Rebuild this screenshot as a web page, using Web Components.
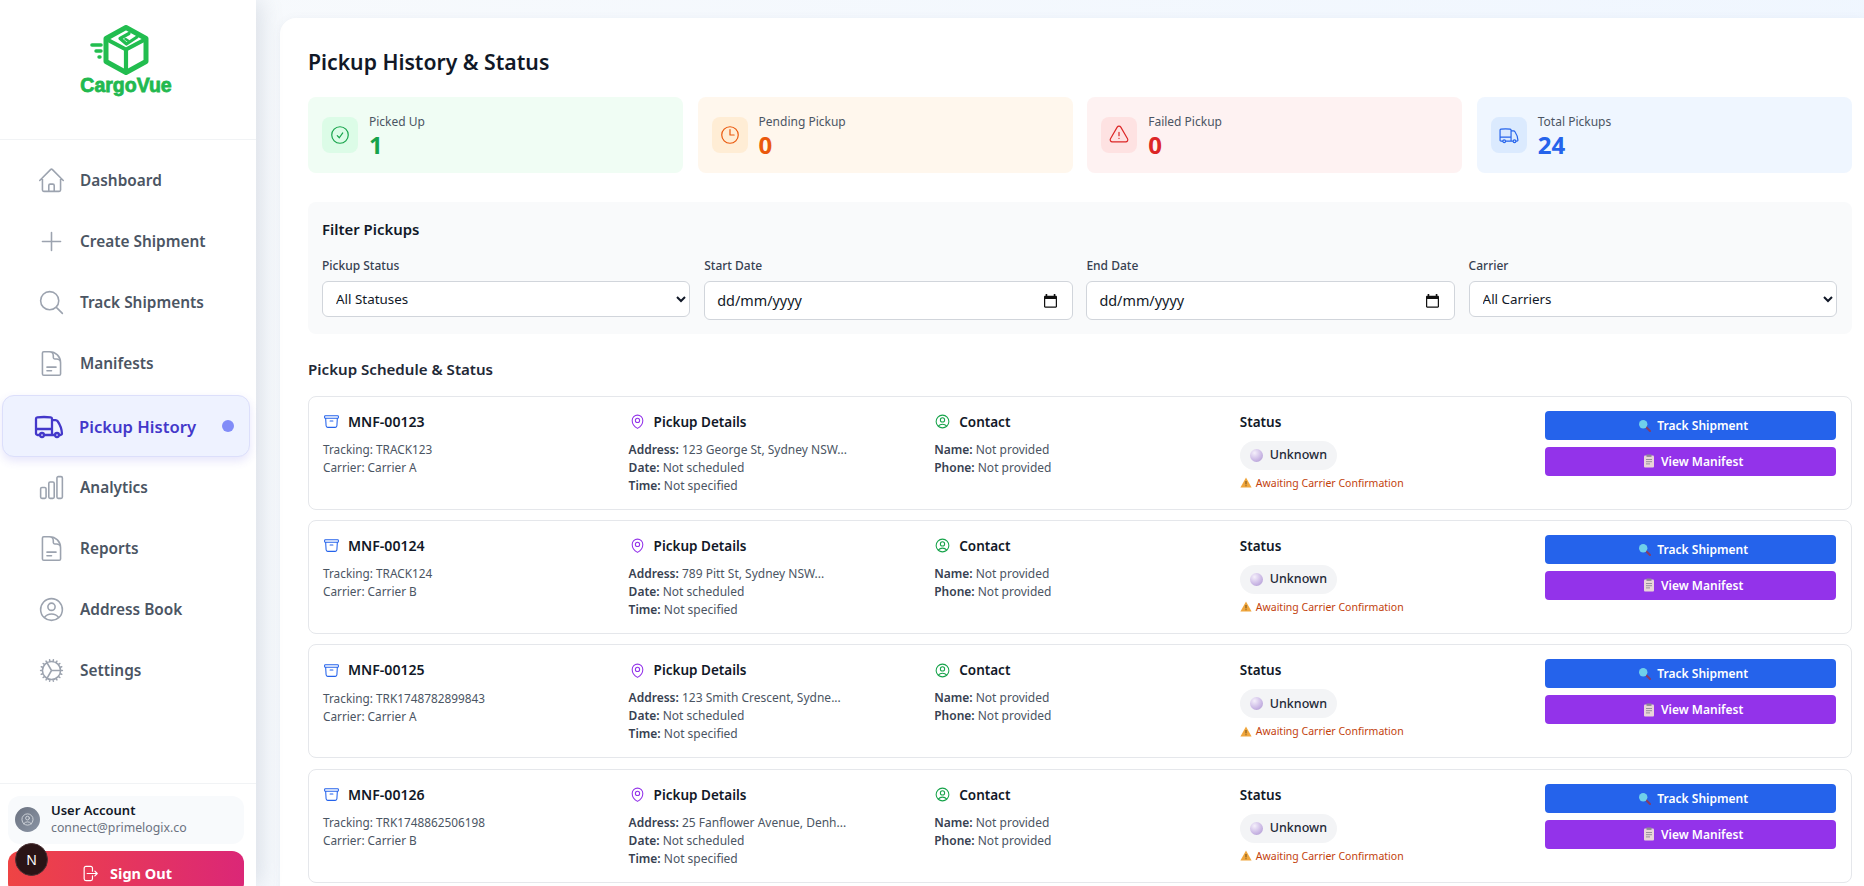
<!DOCTYPE html>
<html lang="en">
<head>
<meta charset="utf-8">
<title>CargoVue - Pickup History</title>
<style>
  html, body { margin: 0; height: 100%; overflow: hidden; }
  body {
    font-family: "Noto Sans", "Open Sans", sans-serif;
    color: #111827;
    display: flex;
    background: linear-gradient(100deg, #f8fafc 0%, #eff6ff 100%);
  }
</style>
</head>
<body>
  <cv-sidebar></cv-sidebar>
  <cv-main>
    <h-title>Pickup History &amp; Status</h-title>
    <stat-row>
      <stat-card tone="green" icon="check" label="Picked Up" value="1"></stat-card>
      <stat-card tone="orange" icon="clock" label="Pending Pickup" value="0"></stat-card>
      <stat-card tone="red" icon="warning" label="Failed Pickup" value="0"></stat-card>
      <stat-card tone="blue" icon="truck" label="Total Pickups" value="24"></stat-card>
    </stat-row>
    <filter-panel></filter-panel>
    <section-title>Pickup Schedule &amp; Status</section-title>
    <pickup-card manifest="MNF-00123" tracking="TRACK123" carrier="Carrier A" address="123 George St, Sydney NSW..."></pickup-card>
    <pickup-card manifest="MNF-00124" tracking="TRACK124" carrier="Carrier B" address="789 Pitt St, Sydney NSW..."></pickup-card>
    <pickup-card manifest="MNF-00125" tracking="TRK1748782899843" carrier="Carrier A" address="123 Smith Crescent, Sydne..."></pickup-card>
    <pickup-card manifest="MNF-00126" tracking="TRK1748862506198" carrier="Carrier B" address="25 Fanflower Avenue, Denh..."></pickup-card>
  </cv-main>
  <dev-badge>N</dev-badge>

<script>
const ICONS = {
  home: "M2.25 12l8.954-8.955c.44-.439 1.152-.439 1.591 0L21.75 12M4.5 9.75v10.125c0 .621.504 1.125 1.125 1.125H9.75v-4.875c0-.621.504-1.125 1.125-1.125h2.25c.621 0 1.125.504 1.125 1.125V21h4.125c.621 0 1.125-.504 1.125-1.125V9.75M8.25 21h8.25",
  plus: "M12 4.5v15m7.5-7.5h-15",
  search: "M21 21l-5.197-5.197m0 0A7.5 7.5 0 105.196 5.196a7.5 7.5 0 0010.607 10.607z",
  doc: "M19.5 14.25v-2.625a3.375 3.375 0 00-3.375-3.375h-1.5A1.125 1.125 0 0113.5 7.125v-1.5a3.375 3.375 0 00-3.375-3.375H8.25m0 12.75h7.5m-7.5 3H12M10.5 2.25H5.625c-.621 0-1.125.504-1.125 1.125v17.25c0 .621.504 1.125 1.125 1.125h12.75c.621 0 1.125-.504 1.125-1.125V11.25a9 9 0 00-9-9z",
  truck: "M8.25 18.75a1.5 1.5 0 01-3 0m3 0a1.5 1.5 0 00-3 0m3 0h6m-9 0H3.375a1.125 1.125 0 01-1.125-1.125V14.25m17.25 4.5a1.5 1.5 0 01-3 0m3 0a1.5 1.5 0 00-3 0m3 0h1.125c.621 0 1.129-.504 1.09-1.124a17.902 17.902 0 00-3.213-9.193 2.056 2.056 0 00-1.58-.86H14.25M16.5 18.75h-2.25m0-11.177v-.958c0-.568-.422-1.048-.987-1.106a48.554 48.554 0 00-10.026 0 1.106 1.106 0 00-.987 1.106v7.635m12-6.677v6.677m0 4.5v-4.5m0 0h-12",
  chart: "M3 13.125C3 12.504 3.504 12 4.125 12h2.25c.621 0 1.125.504 1.125 1.125v6.75C7.5 20.496 6.996 21 6.375 21h-2.25A1.125 1.125 0 013 19.875v-6.75zM9.75 8.625c0-.621.504-1.125 1.125-1.125h2.25c.621 0 1.125.504 1.125 1.125v11.25c0 .621-.504 1.125-1.125 1.125h-2.25a1.125 1.125 0 01-1.125-1.125V8.625zM16.5 4.125c0-.621.504-1.125 1.125-1.125h2.25C20.496 3 21 3.504 21 4.125v15.75c0 .621-.504 1.125-1.125 1.125h-2.25a1.125 1.125 0 01-1.125-1.125V4.125z",
  user: "M17.982 18.725A7.488 7.488 0 0012 15.75a7.488 7.488 0 00-5.982 2.975m11.963 0a9 9 0 10-11.963 0m11.963 0A8.966 8.966 0 0112 21a8.966 8.966 0 01-5.982-2.275M15 9.75a3 3 0 11-6 0 3 3 0 016 0z",
  cog: "M4.5 12a7.5 7.5 0 0015 0m-15 0a7.5 7.5 0 1115 0m-15 0H3m16.5 0H21m-1.5 0H12m-8.457 3.077l1.41-.513m14.095-5.13l1.41-.513M5.106 17.785l1.15-.964m11.49-9.642l1.149-.964M7.501 19.795l.75-1.3m7.5-12.99l.75-1.3m-6.063 16.658l.26-1.477m2.605-14.772l.26-1.477m0 17.726l-.26-1.477M10.698 4.614l-.26-1.477M16.5 19.794l-.75-1.299M7.5 4.205L12 12m6.894 5.785l-1.149-.964M6.256 7.178l-1.15-.964m15.352 8.864l-1.41-.513M4.954 9.435l-1.41-.514M12.002 12l-3.75 6.495",
  check: "M9 12.75L11.25 15 15 9.75M21 12a9 9 0 11-18 0 9 9 0 0118 0z",
  clock: "M12 6v6h4.5m4.5 0a9 9 0 11-18 0 9 9 0 0118 0z",
  warning: "M12 9v3.75m-9.303 3.376c-.866 1.5.217 3.374 1.948 3.374h14.71c1.73 0 2.813-1.874 1.948-3.374L13.949 3.378c-.866-1.5-3.032-1.5-3.898 0L2.697 16.126zM12 15.75h.007v.008H12v-.008z",
  archive: "M20.25 7.5l-.625 10.632a2.25 2.25 0 01-2.247 2.118H6.622a2.25 2.25 0 01-2.247-2.118L3.75 7.5M10 11.25h4M3.375 7.5h17.25c.621 0 1.125-.504 1.125-1.125v-1.5c0-.621-.504-1.125-1.125-1.125H3.375c-.621 0-1.125.504-1.125 1.125v1.5c0 .621.504 1.125 1.125 1.125z",
  pin: "M15 10.5a3 3 0 11-6 0 3 3 0 016 0zM19.5 10.5c0 7.142-7.5 11.25-7.5 11.25S4.5 17.642 4.5 10.5a7.5 7.5 0 1115 0z",
  logout: "M15.75 9V5.25A2.25 2.25 0 0013.5 3h-6a2.25 2.25 0 00-2.25 2.25v13.5A2.25 2.25 0 007.5 21h6a2.25 2.25 0 002.25-2.25V15m3 0l3-3m0 0l-3-3m3 3H9"
};

// Base for the small elements: sets the shadow root from a string
class Base extends HTMLElement {
  connectedCallback() {
    if (this.shadowRoot) return;
    this.attachShadow({ mode: "open" });
    this.shadowRoot.innerHTML = this.markup();
  }
  attr(name, fallback = "") {
    return this.getAttribute(name) || fallback;
  }
}

class UiIcon extends Base {
  markup() {
    const size = this.attr("size", "24");
    const stroke = this.attr("stroke", "1.5");
    return `<style>:host { display: inline-flex; flex: none; }</style>
      <svg width="${size}" height="${size}" viewBox="0 0 24 24" fill="none" stroke="currentColor"
        stroke-width="${stroke}" stroke-linecap="round" stroke-linejoin="round">
        <path d="${ICONS[this.attr("name")]}"/>
      </svg>`;
  }
}

class CvLogo extends Base {
  markup() {
    return `<style>
        :host { display: flex; flex-direction: column; align-items: center; height: 140px; box-sizing: border-box; padding: 25px 4px 0 0; border-bottom: 1px solid #f1f3f5; }
        svg { display: block; margin-left: -17px; }
        span { font: 700 19.5px/20px "Liberation Sans", sans-serif; color: #22b94f; -webkit-text-stroke: .8px #22b94f; margin-top: 0; }
      </style>
      <svg width="62" height="50" viewBox="0 0 62 50" fill="none" stroke="#22bd4f" stroke-linejoin="round" stroke-linecap="round">
        <path d="M39 2.5 59 13.5v23L39 47.5 19 36.5v-23z" stroke-width="5"/>
        <path d="M21 15 39 24.5 57 15M39 24.5V46" stroke-width="4.2"/>
        <path d="M42 8.5 33 13.5 39.5 19 50 12" stroke-width="3.2"/>
        <path d="M38.5 14l3 2" stroke-width="2.6"/>
        <path d="M5 20h9" stroke-width="3.6"/><path d="M9 26h5" stroke-width="3.4"/><path d="M12 32h1" stroke-width="3.4"/>
      </svg>
      <span>CargoVue</span>`;
  }
}

class NavItem extends Base {
  markup() {
    const active = this.hasAttribute("active");
    return `<style>
        :host { display: flex; align-items: center; box-sizing: border-box; height: 61px; padding-left: 37px; gap: 14px; font-size: 15.4px; font-weight: 600; color: #4b5563; }
        :host([active]) { height: 62px; margin: 1px 6px 0 2px; padding: 0 15px 0 30px; gap: 14px; font-size: 16.6px; color: #4338ca; background: #eef2ff; border: 1px solid #dcdffb; border-radius: 12px; box-shadow: 0 4px 10px rgba(79,70,229,.14); }
        i { margin-left: auto; width: 12px; height: 12px; border-radius: 50%; background: #818cf8; }
        ui-icon { color: #9ca3af; }
        :host([active]) ui-icon { color: #4338ca; }
      </style>
      <ui-icon name="${this.attr("icon")}" size="${active ? 32 : 29}" stroke="${active ? 1.7 : 1.3}"></ui-icon>
      <span>${this.attr("label")}</span>${active ? "<i></i>" : ""}`;
  }
}

class UserCard extends Base {
  markup() {
    return `<style>
        :host { display: flex; align-items: center; gap: 11px; box-sizing: border-box; height: 48px; padding: 0 7px 2px; margin-bottom: 7px; background: #f8fafc; border-radius: 12px; }
        .avatar { width: 25px; height: 25px; border-radius: 50%; display: grid; place-items: center; color: #d1d5db; background: linear-gradient(135deg, #6b7280, #8b95a5); }
        b { display: block; font-size: 13px; font-weight: 600; line-height: 18px; color: #111827; }
        span { display: block; font-size: 12.3px; line-height: 18px; color: #6b7280; }
      </style>
      <div class="avatar"><ui-icon name="user" size="15"></ui-icon></div>
      <div><b>User Account</b><span>connect@primelogix.co</span></div>`;
  }
}

class CvSidebar extends Base {
  markup() {
    const items = [
      ["home", "Dashboard"], ["plus", "Create Shipment"], ["search", "Track Shipments"], ["doc", "Manifests"],
      ["truck", "Pickup History", true], ["chart", "Analytics"], ["doc", "Reports"], ["user", "Address Book"], ["cog", "Settings"]
    ];
    return `<style>
        :host { display: block; flex: none; width: 256px; height: 100vh; background: #fff; box-shadow: 4px 0 22px rgba(100,116,139,.2); position: relative; z-index: 1; }
        nav { height: 643px; box-sizing: border-box; padding-top: 10px; }
        footer { border-top: 1px solid #f1f3f5; padding: 12px 12px 0 8px; }
        button { display: flex; width: 100%; height: 44px; align-items: center; justify-content: center; gap: 11px; border: 0; border-radius: 12px; color: #fff; font: 700 14.5px "Noto Sans", sans-serif; background: linear-gradient(90deg, #ef4444, #db2777); }
      </style>
      <cv-logo></cv-logo>
      <nav>${items.map(([icon, label, on]) => `<nav-item icon="${icon}" label="${label}" ${on ? "active" : ""}></nav-item>`).join("")}</nav>
      <footer>
        <user-card></user-card>
        <button><ui-icon name="logout" size="19"></ui-icon>Sign Out</button>
      </footer>`;
  }
}

class CvMain extends Base {
  markup() {
    return `<style>
        :host { display: block; flex: 1; min-width: 0; padding: 18px 0 0 24px; }
        div { height: 100vh; box-sizing: border-box; padding: 0 12px 0 28px; background: #fff; border-top-left-radius: 16px; box-shadow: 0 1px 8px rgba(100,116,139,.08); }
      </style>
      <div><slot></slot></div>`;
  }
}

class HTitle extends Base {
  markup() {
    return `<style>:host { display: block; padding-top: 29px; height: 50px; font-size: 21.2px; line-height: 30px; font-weight: 600; color: #111827; }</style><slot></slot>`;
  }
}

class StatRow extends Base {
  markup() {
    return `<style>:host { display: grid; grid-template-columns: repeat(4, 1fr); gap: 14.4px; margin-bottom: 29px; }</style><slot></slot>`;
  }
}

class StatCard extends Base {
  markup() {
    const tones = {
      green: ["#f0fdf4", "#dcfce7", "#16a34a"],
      orange: ["#fff7ed", "#ffedd5", "#ea580c"],
      red: ["#fef2f2", "#fee2e2", "#dc2626"],
      blue: ["#eff6ff", "#dbeafe", "#2563eb"]
    };
    const [bg, iconBg, fg] = tones[this.attr("tone")];
    return `<style>
        :host { display: flex; align-items: center; gap: 11px; height: 76px; padding: 0 14px; background: ${bg}; border-radius: 8px; }
        .box { width: 36px; height: 36px; display: grid; place-items: center; background: ${iconBg}; border-radius: 8px; color: ${fg}; }
        small { display: block; font-size: 12px; line-height: 18px; color: #4b5563; padding-top: 1px; }
        b { display: block; font-size: 24px; line-height: 29px; font-weight: 700; color: ${fg}; margin: -1px 0 -1px; }
      </style>
      <div class="box"><ui-icon name="${this.attr("icon")}" size="22" stroke="1.3"></ui-icon></div>
      <div><small>${this.attr("label")}</small><b>${this.attr("value")}</b></div>`;
  }
}

class FilterField extends Base {
  markup() {
    const options = this.attr("options");
    const control = options
      ? `<select>${options.split("|").map(o => `<option>${o}</option>`).join("")}</select>`
      : `<div class="date"><span>dd/mm/yyyy</span>
          <svg width="13" height="15" viewBox="0 0 16 18" fill="#111"><path d="M14.5 3H14V1h-2v2H4V1H2v2h-.5C.67 3 0 3.67 0 4.5v12C0 17.33.67 18 1.5 18h13c.83 0 1.5-.67 1.5-1.5v-12C16 3.67 15.33 3 14.5 3zm0 13.5h-13V7h13v9.5z"/></svg>
        </div>`;
    return `<style>
        :host { display: block; min-width: 0; }
        label { display: block; font-size: 12px; line-height: 18px; font-weight: 500; color: #374151; margin-bottom: 6px; }
        select { width: 100%; height: 36px; padding: 0 9px; font: 13.4px "Noto Sans", sans-serif; color: #111827; background: #fff; border: 1px solid #d1d5db; border-radius: 6px; }
        .date { height: 37px; display: flex; align-items: center; justify-content: space-between; padding: 0 15px 0 12px; font-size: 14.4px; color: #111827; background: #fff; border: 1px solid #d1d5db; border-radius: 6px; }
      </style>
      <label>${this.attr("label")}</label>${control}`;
  }
}

class FilterPanel extends Base {
  markup() {
    return `<style>
        :host { display: block; box-sizing: border-box; height: 132px; padding: 17px 15px 0 14px; background: #f9fafb; border-radius: 8px; }
        h3 { margin: 0 0 18px; font-size: 14.9px; line-height: 20px; font-weight: 600; color: #111827; }
        div { display: grid; grid-template-columns: repeat(4, 1fr); gap: 13.8px; align-items: start; }
      </style>
      <h3>Filter Pickups</h3>
      <div>
        <filter-field label="Pickup Status" options="All Statuses|Picked Up|Pending Pickup|Failed Pickup"></filter-field>
        <filter-field label="Start Date"></filter-field>
        <filter-field label="End Date"></filter-field>
        <filter-field label="Carrier" options="All Carriers|Carrier A|Carrier B"></filter-field>
      </div>`;
  }
}

class SectionTitle extends Base {
  markup() {
    return `<style>:host { display: block; padding-top: 24px; height: 37.5px; font-size: 15.1px; line-height: 22px; font-weight: 600; color: #1f2937; }</style><slot></slot>`;
  }
}

class PickupCard extends Base {
  markup() {
    const head = (icon, color, text, cls = "") =>
      `<h4 class="${cls}">${icon ? `<ui-icon name="${icon}" size="17" style="color:${color}"></ui-icon>` : ""}<span>${text}</span></h4>`;
    return `<style>
        :host { display: grid; grid-template-columns: repeat(5, 1fr); gap: 15px; box-sizing: border-box; height: 114px; margin-bottom: 10.4px; padding: 14px 15px 14px 14px; border: 1px solid #e5e7eb; border-radius: 8px; font-size: 12px; line-height: 18px; color: #4b5563; }
        h4 { display: flex; align-items: center; gap: 8px; height: 20px; margin: 1px 0 9px; font-size: 13.5px; font-weight: 600; color: #111827; }
        h4.id { font-size: 14.1px; }
        .first p { font-size: 11.8px; position: relative; top: -.5px; }
        p { margin: 0; }
        b { font-weight: 600; color: #374151; }
        .pill { display: inline-flex; align-items: center; gap: 7px; height: 29px; padding: 0 10px; margin: 0 0 4px; background: #f3f4f6; border-radius: 15px; font-size: 12.5px; font-weight: 500; color: #1f2937; vertical-align: top; }
        .ball { width: 13px; height: 13px; border-radius: 50%; background: radial-gradient(circle at 35% 30%, #f5f0fb, #c9b6e4 60%, #a893cc); }
        .note { display: flex; align-items: center; gap: 4px; font-size: 10.5px; color: #c2410c; }
        .btns { display: flex; flex-direction: column; gap: 7px; }
        button { display: flex; align-items: center; justify-content: center; gap: 6px; height: 29px; padding: 0 0 0 5px; border: 0; border-radius: 4px; color: #fff; font: 600 12px "Noto Sans", sans-serif; }
        .blue { background: #2563eb; }
        .purple { background: #9333ea; }
      </style>
      <div class="first">
        ${head("archive", "#2563eb", this.attr("manifest"), "id")}
        <p>Tracking: ${this.attr("tracking")}</p>
        <p>Carrier: ${this.attr("carrier")}</p>
      </div>
      <div>
        ${head("pin", "#9333ea", "Pickup Details")}
        <p><b>Address:</b> ${this.attr("address")}</p>
        <p><b>Date:</b> Not scheduled</p>
        <p><b>Time:</b> Not specified</p>
      </div>
      <div>
        ${head("user", "#16a34a", "Contact")}
        <p><b>Name:</b> Not provided</p>
        <p><b>Phone:</b> Not provided</p>
      </div>
      <div>
        ${head("", "", "Status")}
        <span class="pill"><i class="ball"></i>Unknown</span>
        <div class="note">
          <svg width="12" height="11" viewBox="0 0 12 11"><path d="M6 .5 11.6 10.5H.4z" fill="#f0a63c"/><path d="M6 4v3.4M6 8.3v.9" stroke="#6b4a16" stroke-width="1"/></svg>
          Awaiting Carrier Confirmation
        </div>
      </div>
      <div class="btns">
        <button class="blue">
          <svg width="13" height="13" viewBox="0 0 13 13"><path d="M8 8l4 4" stroke="#8a3b63" stroke-width="2" stroke-linecap="round"/><circle cx="5.2" cy="5.2" r="4.2" fill="#6fd0ea"/></svg>
          Track Shipment
        </button>
        <button class="purple">
          <svg width="12" height="14" viewBox="0 0 12 14"><rect x="1" y="1.5" width="10" height="12" rx="1" fill="#e9d5d8"/><rect x="3.5" y=".5" width="5" height="2.4" fill="#8d8a94"/><path d="M3 5.5h6M3 7.7h6M3 9.9h4" stroke="#8d8a94" stroke-width=".9"/></svg>
          View Manifest
        </button>
      </div>`;
  }
}

class DevBadge extends Base {
  markup() {
    return `<style>
        :host { position: fixed; left: 15px; bottom: 10px; z-index: 5; width: 33px; height: 33px; border-radius: 50%; display: grid; place-items: center; background: #2a1416; border: 1px solid #4a3034; box-sizing: border-box; color: #fff; font-size: 14px; }
      </style><slot></slot>`;
  }
}

// define children first, sidebar and main last
customElements.define("ui-icon", UiIcon);
customElements.define("cv-logo", CvLogo);
customElements.define("nav-item", NavItem);
customElements.define("user-card", UserCard);
customElements.define("cv-sidebar", CvSidebar);
customElements.define("cv-main", CvMain);
customElements.define("h-title", HTitle);
customElements.define("stat-row", StatRow);
customElements.define("stat-card", StatCard);
customElements.define("filter-field", FilterField);
customElements.define("filter-panel", FilterPanel);
customElements.define("section-title", SectionTitle);
customElements.define("pickup-card", PickupCard);
customElements.define("dev-badge", DevBadge);
</script>
</body>
</html>
